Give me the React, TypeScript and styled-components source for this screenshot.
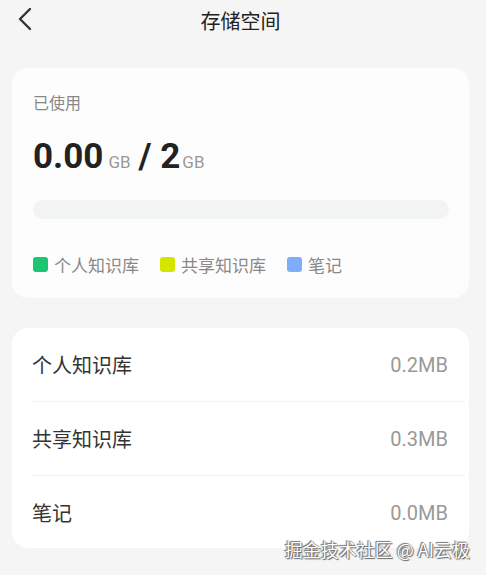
import React from "react";
import styled, { createGlobalStyle } from "styled-components";

const GlobalStyle = createGlobalStyle`
  html, body {
    margin: 0;
    padding: 0;
    background: #f5f5f5;
    font-family: Roboto, "Noto Sans CJK SC", sans-serif;
  }
`;

const legend = [
  { name: "个人知识库", color: "#1ac66f" },
  { name: "共享知识库", color: "#d4e600" },
  { name: "笔记", color: "#7eaefb" },
];

const rows = [
  { name: "个人知识库", size: "0.2MB" },
  { name: "共享知识库", size: "0.3MB" },
  { name: "笔记", size: "0.0MB" },
];

export default function App() {
  return (
    <Page>
      <GlobalStyle />
      <Header>
        <Back>
          <svg width="16" height="24" viewBox="0 0 16 24">
            <path d="M13 2 L3 12 L13 22" fill="none" stroke="#333" strokeWidth="2.4" strokeLinecap="round" strokeLinejoin="round" />
          </svg>
        </Back>
        <Title>存储空间</Title>
      </Header>

      <Card>
        <UsedLabel>已使用</UsedLabel>
        <Usage>
          <Big>0.00</Big>
          <Unit>GB</Unit>
          <Big>/ 2</Big>
          <Unit $tight>GB</Unit>
        </Usage>
        <Bar />
        <Legend>
          {legend.map((l) => (
            <LegendItem key={l.name}>
              <Swatch $color={l.color} />
              {l.name}
            </LegendItem>
          ))}
        </Legend>
      </Card>

      <ListCard>
        {rows.map((r) => (
          <Row key={r.name}>
            <RowName>{r.name}</RowName>
            <RowSize>{r.size}</RowSize>
          </Row>
        ))}
      </ListCard>

      <Watermark>掘金技术社区 @ AI云极</Watermark>
    </Page>
  );
}

const Page = styled.div`
  position: relative;
  width: 486px;
  height: 575px;
  overflow: hidden;
  padding: 0 17px 0 12px;
  box-sizing: border-box;
`;

const Header = styled.div`
  position: relative;
  height: 40px;
  display: flex;
  align-items: center;
  justify-content: center;
`;

const Back = styled.div`
  position: absolute;
  left: 5px;
  top: 7px;
  display: flex;
`;

const Title = styled.div`
  font-size: 20px;
  color: #222;
`;

const Card = styled.div`
  margin-top: 28px;
  background: #fdfdfd;
  border-radius: 16px;
  padding: 26px 20px 24px 21px;
  height: 230px;
  box-sizing: border-box;
`;

const UsedLabel = styled.div`
  font-size: 16px;
  line-height: 20px;
  color: #888;
`;

const Usage = styled.div`
  display: flex;
  align-items: baseline;
  margin-top: 23px;
  height: 40px;
`;

const Big = styled.span`
  font-size: 35px;
  font-weight: 700;
  color: #222;
  line-height: 40px;
`;

const Unit = styled.span<{ $tight?: boolean }>`
  font-size: 17px;
  color: #999;
  margin: ${(p) => (p.$tight ? "0 0 0 2px" : "0 8px 0 5px")};
`;

const Bar = styled.div`
  margin-top: 23px;
  height: 19px;
  border-radius: 10px;
  background: #f2f4f3;
`;

const Legend = styled.div`
  display: flex;
  gap: 21px;
  margin-top: 33px;
`;

const LegendItem = styled.div`
  display: flex;
  align-items: center;
  font-size: 17px;
  color: #888;
  gap: 6px;
`;

const Swatch = styled.span<{ $color: string }>`
  width: 15px;
  height: 15px;
  border-radius: 3px;
  background: ${(p) => p.$color};
`;

const ListCard = styled.div`
  margin-top: 30px;
  background: #fff;
  border-radius: 16px;
  padding: 0 4px 0 20px;
  height: 220px;
  box-sizing: border-box;
`;

const Row = styled.div`
  display: flex;
  align-items: center;
  justify-content: space-between;
  height: 73px;
  padding-right: 17px;
  border-bottom: 1px solid #f2f2f2;
  &:last-child {
    border-bottom: none;
  }
`;

const RowName = styled.span`
  font-size: 20px;
  color: #333;
`;

const RowSize = styled.span`
  font-size: 20px;
  color: #999;
`;

const Watermark = styled.div`
  position: absolute;
  right: 16px;
  bottom: 13px;
  font-size: 18px;
  color: #fff;
  font-family: "Noto Sans CJK SC", sans-serif;
  text-shadow: 0 0 1px #555, 1px 1px 1px #666, -1px -1px 1px #777;
`;
